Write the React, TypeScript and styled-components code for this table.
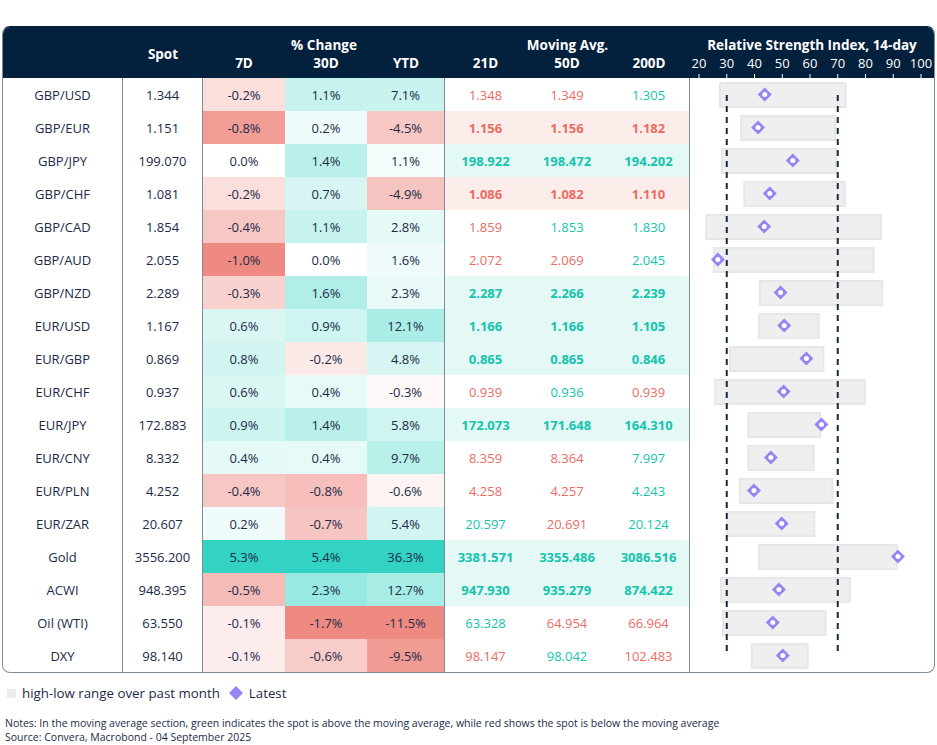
import styled, { createGlobalStyle } from "styled-components";

type Row = {
  name: string;
  spot: number;
  change: [number, number, number];
  ma: [number, number, number];
  rsi: [number, number, number];
};

const rows: Row[] = [
  { name: "GBP/USD", spot: 1.344, change: [-0.2, 1.1, 7.1], ma: [1.348, 1.349, 1.305], rsi: [27.2, 73.2, 43.7] },
  { name: "GBP/EUR", spot: 1.151, change: [-0.8, 0.2, -4.5], ma: [1.156, 1.156, 1.182], rsi: [34.8, 69.5, 41.3] },
  { name: "GBP/JPY", spot: 199.07, change: [0.0, 1.4, 1.1], ma: [198.922, 198.472, 194.202], rsi: [27.9, 69.8, 53.8] },
  { name: "GBP/CHF", spot: 1.081, change: [-0.2, 0.7, -4.9], ma: [1.086, 1.082, 1.11], rsi: [36.0, 72.9, 45.5] },
  { name: "GBP/CAD", spot: 1.854, change: [-0.4, 1.1, 2.8], ma: [1.859, 1.853, 1.83], rsi: [22.2, 85.9, 43.5] },
  { name: "GBP/AUD", spot: 2.055, change: [-1.0, 0.0, 1.6], ma: [2.072, 2.069, 2.045], rsi: [25.0, 83.3, 26.8] },
  { name: "GBP/NZD", spot: 2.289, change: [-0.3, 1.6, 2.3], ma: [2.287, 2.266, 2.239], rsi: [41.6, 86.4, 49.4] },
  { name: "EUR/USD", spot: 1.167, change: [0.6, 0.9, 12.1], ma: [1.166, 1.166, 1.105], rsi: [41.3, 63.5, 50.7] },
  { name: "EUR/GBP", spot: 0.869, change: [0.8, -0.2, 4.8], ma: [0.865, 0.865, 0.846], rsi: [30.8, 65.2, 58.7] },
  { name: "EUR/CHF", spot: 0.937, change: [0.6, 0.4, -0.3], ma: [0.939, 0.936, 0.939], rsi: [25.5, 80.2, 50.5] },
  { name: "EUR/JPY", spot: 172.883, change: [0.9, 1.4, 5.8], ma: [172.073, 171.648, 164.31], rsi: [37.4, 64.0, 64.1] },
  { name: "EUR/CNY", spot: 8.332, change: [0.4, 0.4, 9.7], ma: [8.359, 8.364, 7.997], rsi: [37.4, 61.7, 45.9] },
  { name: "EUR/PLN", spot: 4.252, change: [-0.4, -0.8, -0.6], ma: [4.258, 4.257, 4.243], rsi: [34.4, 68.5, 39.8] },
  { name: "EUR/ZAR", spot: 20.607, change: [0.2, -0.7, 5.4], ma: [20.597, 20.691, 20.124], rsi: [29.8, 61.9, 49.8] },
  { name: "Gold", spot: 3556.2, change: [5.3, 5.4, 36.3], ma: [3381.571, 3355.486, 3086.516], rsi: [41.3, 91.6, 91.7] },
  { name: "ACWI", spot: 948.395, change: [-0.5, 2.3, 12.7], ma: [947.93, 935.279, 874.422], rsi: [27.6, 74.7, 48.8] },
  { name: "Oil (WTI)", spot: 63.55, change: [-0.1, -1.7, -11.5], ma: [63.328, 64.954, 66.964], rsi: [28.3, 66.0, 46.6] },
  { name: "DXY", spot: 98.14, change: [-0.1, -0.6, -9.5], ma: [98.147, 98.042, 102.483], rsi: [38.7, 59.5, 50.2] },
];

const NAVY = "#03203c";
const TEXT = "#1b2a47";
const LINE = "#7f8c98";
const UP = "#14c4ad";
const DOWN = "#ec6c63";
const PURPLE = "#9484f4";

const COLS = "120px 80px 82px 82px 78px 81px 82px 82px 244px";
const ROW_H = 33;

// rsi axis: 20 -> 9px, 10 points = 27.75px
const rx = (v: number) => 9 + (v - 20) * 2.775;
const ticks = [20, 30, 40, 50, 60, 70, 80, 90, 100];

const mix = (t: number, to: [number, number, number]) => {
  const c = to.map((x) => Math.round(255 - t * (255 - x)));
  return `rgb(${c[0]}, ${c[1]}, ${c[2]})`;
};

const colMin = [0, 1, 2].map((i) => Math.min(...rows.map((r) => r.change[i])));
const colMax = [0, 1, 2].map((i) => Math.max(...rows.map((r) => r.change[i])));

function heat(v: number, i: number) {
  if (v > 0) return mix(Math.pow(v / colMax[i], 0.8), [51, 211, 195]);
  if (v < 0) return mix(Math.pow(v / colMin[i], 0.8), [238, 138, 130]);
  return "#ffffff";
}

const GlobalStyle = createGlobalStyle`
  body {
    margin: 0;
    background: #ffffff;
    font-family: "Open Sans", "Noto Sans", sans-serif;
    color: ${TEXT};
  }
`;

const Page = styled.div`
  width: 937px;
  padding: 26px 0 0 2px;
  box-sizing: border-box;
`;

const Card = styled.div`
  width: 933px;
  box-sizing: border-box;
  border: 1px solid ${LINE};
  border-top-color: ${NAVY};
  border-radius: 8px;
  overflow: hidden;
`;

const Head = styled.div`
  display: grid;
  grid-template-columns: ${COLS};
  grid-template-rows: 18px 24px;
  padding-top: 9px;
  background: ${NAVY};
  color: #ffffff;
  font-weight: 700;
  font-size: 13.5px;
  line-height: 18px;
`;

const HeadCell = styled.div<{ $col: string; $row?: string }>`
  grid-column: ${(p) => p.$col};
  grid-row: ${(p) => p.$row ?? "auto"};
  text-align: center;
  white-space: nowrap;
`;

const SpotHead = styled(HeadCell)`
  margin-top: 9px;
`;

const Axis = styled.svg`
  grid-column: 9;
  grid-row: 2;
  display: block;
  overflow: visible;
`;

const BodyRow = styled.div`
  display: grid;
  grid-template-columns: ${COLS};
  height: ${ROW_H}px;
  font-size: 13px;
`;

const Cell = styled.div<{ $line?: boolean }>`
  display: flex;
  align-items: center;
  justify-content: center;
  box-sizing: border-box;
  border-right: ${(p) => (p.$line ? `1px solid ${LINE}` : "none")};
  white-space: nowrap;
`;

const HeatCell = styled(Cell)<{ $bg: string }>`
  background: ${(p) => p.$bg};
`;

const MaCell = styled(Cell)<{ $up: boolean; $bold: boolean; $bg: string }>`
  color: ${(p) => (p.$up ? UP : DOWN)};
  font-weight: ${(p) => (p.$bold ? 700 : 400)};
  background: ${(p) => p.$bg};
`;

const RsiCell = styled.svg`
  display: block;
`;

const Legend = styled.div`
  display: flex;
  align-items: center;
  margin-top: 12px;
  padding-left: 5px;
  font-size: 13.3px;
  line-height: 16px;
  color: ${TEXT};
`;

const Swatch = styled.span`
  width: 9px;
  height: 9px;
  background: #ececec;
  margin-right: 6px;
`;

const LegendMark = styled.svg`
  margin: 0 6px 0 9px;
`;

const Notes = styled.div`
  margin-top: 15px;
  padding-left: 3px;
  font-size: 10.5px;
  line-height: 14px;
  color: ${TEXT};
`;

function RsiBar({ rsi, index }: { rsi: [number, number, number]; index: number }) {
  const [lo, hi, last] = rsi;
  const cy = ROW_H / 2;
  const first = index === 0;
  const lastRow = index === rows.length - 1;
  const y1 = first ? 17 : 0;
  const y2 = lastRow ? 14 : ROW_H;
  const offset = first ? 0 : 5;
  return (
    <RsiCell width={244} height={ROW_H}>
      <rect x={rx(lo) + 1} y={5} width={rx(hi) - rx(lo) - 2} height={24} fill="#efefef" stroke="#e7e7e7" strokeWidth={2} />
      {[30, 70].map((v) => (
        <line
          key={v}
          x1={rx(v)}
          x2={rx(v)}
          y1={y1}
          y2={y2}
          stroke="#17283f"
          strokeWidth={2}
          strokeDasharray="6 5"
          strokeDashoffset={offset}
        />
      ))}
      <polygon
        points={`${rx(last)},${cy - 7} ${rx(last) + 7},${cy} ${rx(last)},${cy + 7} ${rx(last) - 7},${cy}`}
        fill={PURPLE}
      />
      <circle cx={rx(last)} cy={cy} r={2.5} fill="#ffffff" />
    </RsiCell>
  );
}

export default function App() {
  return (
    <Page>
      <GlobalStyle />
      <Card>
        <Head>
          <SpotHead $col="2" $row="1 / 3">Spot</SpotHead>
          <HeadCell $col="3 / 6" $row="1">% Change</HeadCell>
          <HeadCell $col="3" $row="2">7D</HeadCell>
          <HeadCell $col="4" $row="2">30D</HeadCell>
          <HeadCell $col="5" $row="2">YTD</HeadCell>
          <HeadCell $col="6 / 9" $row="1">Moving Avg.</HeadCell>
          <HeadCell $col="6" $row="2">21D</HeadCell>
          <HeadCell $col="7" $row="2">50D</HeadCell>
          <HeadCell $col="8" $row="2">200D</HeadCell>
          <HeadCell $col="9" $row="1">Relative Strength Index, 14-day</HeadCell>
          <Axis width={244} height={24}>
            {ticks.map((t) => (
              <g key={t}>
                <text
                  x={rx(t)}
                  y={13.5}
                  textAnchor="middle"
                  fill="#ffffff"
                  fontSize={13}
                  fontWeight={400}
                  fontFamily='"Open Sans", sans-serif'
                >
                  {t}
                </text>
                <line x1={rx(t)} x2={rx(t)} y1={20} y2={24} stroke="#ffffff" strokeWidth={1} />
              </g>
            ))}
          </Axis>
        </Head>

        {rows.map((r, index) => {
          const ups = r.ma.map((m) => r.spot > m);
          const allUp = ups.every(Boolean);
          const allDown = ups.every((u) => !u);
          const bg = allUp ? "#e4f8f5" : allDown ? "#fcedeb" : "#ffffff";
          return (
            <BodyRow key={r.name}>
              <Cell $line>{r.name}</Cell>
              <Cell $line>{r.spot.toFixed(3)}</Cell>
              {r.change.map((c, i) => (
                <HeatCell key={i} $bg={heat(c, i)} $line={i === 2}>
                  {c.toFixed(1)}%
                </HeatCell>
              ))}
              {r.ma.map((m, i) => (
                <MaCell key={i} $up={ups[i]} $bold={allUp || allDown} $bg={bg} $line={i === 2}>
                  {m.toFixed(3)}
                </MaCell>
              ))}
              <RsiBar rsi={r.rsi} index={index} />
            </BodyRow>
          );
        })}
      </Card>

      <Legend>
        <Swatch />
        high-low range over past month
        <LegendMark width={14} height={14}>
          <polygon points="7,0 14,7 7,14 0,7" fill={PURPLE} />
        </LegendMark>
        Latest
      </Legend>

      <Notes>
        Notes: In the moving average section, green indicates the spot is above the moving average, while red shows the
        spot is below the moving average
        <br />
        Source: Convera, Macrobond - 04 September 2025
      </Notes>
    </Page>
  );
}
